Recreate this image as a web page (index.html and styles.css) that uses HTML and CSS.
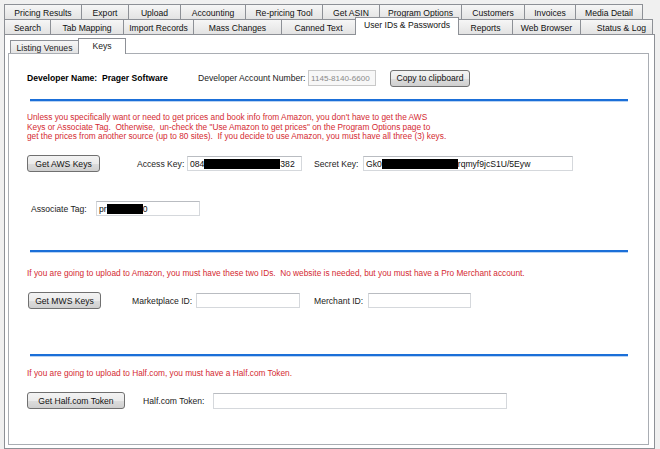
FILE: index.html
```html
<!DOCTYPE html>
<html>
<head>
<meta charset="utf-8">
<link rel="stylesheet" href="styles.css">
</head>
<body>
<div class="win">
  <div class="tabrow r1">
    <div class="tab t-pricing">Pricing Results</div>
    <div class="tab t-export">Export</div>
    <div class="tab t-upload">Upload</div>
    <div class="tab t-accounting">Accounting</div>
    <div class="tab t-repricing">Re-pricing Tool</div>
    <div class="tab t-asin">Get ASIN</div>
    <div class="tab t-options">Program Options</div>
    <div class="tab t-customers">Customers</div>
    <div class="tab t-invoices">Invoices</div>
    <div class="tab t-media">Media Detail</div>
  </div>
  <div class="tabrow r2">
    <div class="tab t-search">Search</div>
    <div class="tab t-mapping">Tab Mapping</div>
    <div class="tab t-import">Import Records</div>
    <div class="tab t-mass">Mass Changes</div>
    <div class="tab t-canned">Canned Text</div>
    <div class="tab sel t-userids">User IDs &amp; Passwords</div>
    <div class="tab t-reports">Reports</div>
    <div class="tab t-web">Web Browser</div>
    <div class="tab t-status">Status &amp; Log</div>
  </div>
  <div class="panel">
    <div class="subtabs">
      <div class="stab t-listing">Listing Venues</div>
      <div class="stab sel t-keys">Keys</div>
    </div>
    <div class="inner">
      <div class="row devrow">
        <div class="devname">Developer Name:&nbsp; Prager Software</div>
        <div class="lbl l-devacct">Developer Account Number:</div>
        <div class="field f-devacct disabled">1145-8140-6600</div>
        <div class="btn b-copy">Copy to clipboard</div>
      </div>
      <div class="rule r-1"></div>
      <p class="note n-aws">Unless you specifically want or need to get prices and book info from Amazon, you don't have to get the AWS<br>Keys or Associate Tag.&nbsp; Otherwise,&nbsp; un-check the "Use Amazon to get prices" on the Program Options page to<br>get the prices from another source (up to 80 sites).&nbsp; If you decide to use Amazon, you must have all three (3) keys.</p>
      <div class="row awsrow">
        <div class="btn b-aws">Get AWS Keys</div>
        <div class="lbl l-access">Access Key:</div>
        <div class="field f-access">084<span class="redact rd-access"></span>382</div>
        <div class="lbl l-secret">Secret Key:</div>
        <div class="field f-secret">Gk0<span class="redact rd-secret"></span>rqmyf9jcS1U/5Eyw</div>
      </div>
      <div class="row assocrow">
        <div class="lbl l-assoc">Associate Tag:</div>
        <div class="field f-assoc">pr<span class="redact rd-assoc"></span>0</div>
      </div>
      <div class="rule r-2"></div>
      <p class="note n-mws">If you are going to upload to Amazon, you must have these two IDs.&nbsp; No website is needed, but you must have a Pro Merchant account.</p>
      <div class="row mwsrow">
        <div class="btn b-mws">Get MWS Keys</div>
        <div class="lbl l-market">Marketplace ID:</div>
        <div class="field f-market"></div>
        <div class="lbl l-merchant">Merchant ID:</div>
        <div class="field f-merchant"></div>
      </div>
      <div class="rule r-3"></div>
      <p class="note n-half">If you are going to upload to Half.com, you must have a Half.com Token.</p>
      <div class="row halfrow">
        <div class="btn b-half">Get Half.com Token</div>
        <div class="lbl l-half">Half.com Token:</div>
        <div class="field f-half"></div>
      </div>
    </div>
  </div>
</div>
</body>
</html>
```
FILE: styles.css
```css
* { box-sizing: border-box; }
html, body { margin: 0; padding: 0; }
body {
  width: 660px;
  height: 449px;
  overflow: hidden;
  background: #f0f0f0;
  font-family: "Liberation Sans", Arial, sans-serif;
  font-size: 8.6px;
  color: #1a1a1a;
}
.win { padding: 4px 6px 0 4px; }

/* top tab rows */
.tabrow { display: flex; align-items: flex-end; height: 15px; }
.tab {
  height: 15px;
  margin-right: -1px;
  border: 1px solid #8d9096;
  border-bottom: 0;
  background: linear-gradient(#f6f6f6, #e3e3e3);
  display: flex;
  align-items: center;
  justify-content: center;
  padding-top: 1px;
  white-space: nowrap;
  color: #111;
}
.tab.sel {
  height: 18px;
  margin-bottom: -1px;
  background: #fff;
  z-index: 2;
  align-items: flex-start;
  padding-top: 2px;
}
.t-pricing { width: 78px; }
.t-export { width: 48px; }
.t-upload { width: 53px; }
.t-accounting { width: 66px; }
.t-repricing { width: 78px; }
.t-asin { width: 58px; }
.t-options { width: 83px; }
.t-customers { width: 64px; }
.t-invoices { width: 52px; }
.t-media { width: 68px; }
.t-search { width: 47px; }
.t-mapping { width: 74px; }
.t-import { width: 71px; }
.t-mass { width: 89px; }
.t-canned { width: 75px; }
.t-userids { width: 104px; }
.t-reports { width: 55px; }
.t-web { width: 69px; }
.t-status { width: 73px; justify-content: flex-end; padding-right: 6px; }

/* main panel */
.panel {
  width: 651px;
  height: 415px;
  border: 1px solid #8d9096;
  background: #fff;
  padding: 3px 0 0 3px;
}
.subtabs { display: flex; align-items: flex-end; height: 15px; padding-left: 2px; }
.stab {
  height: 13px;
  margin-right: -1px;
  border: 1px solid #8d9096;
  border-bottom: 0;
  background: linear-gradient(#f6f6f6, #e3e3e3);
  display: flex;
  align-items: center;
  justify-content: center;
  padding-top: 1px;
  white-space: nowrap;
}
.stab.sel {
  height: 16px;
  margin-bottom: -1px;
  background: #fff;
  z-index: 2;
  align-items: flex-start;
  padding-top: 2px;
}
.t-listing { width: 69px; }
.t-keys { width: 48px; }

.inner {
  width: 641px;
  height: 392px;
  border: 1px solid #a9adb3;
  padding-left: 18px;
}

.row { display: flex; align-items: center; }
.lbl { white-space: nowrap; color: #222; }
.field {
  height: 15px;
  border: 1px solid #d5d8dc;
  border-top-color: #b9bcc1;
  background: #fff;
  padding-left: 2px;
  display: flex;
  align-items: center;
  white-space: nowrap;
  color: #111;
}
.field.disabled { color: #8a8a8a; background: #f7f7f7; border-color: #c8c8c8; }
.redact { display: inline-block; height: 10px; background: #000; }
.btn {
  height: 17px;
  border: 1px solid #707070;
  border-radius: 3px;
  background: linear-gradient(#f3f3f3 0%, #ebebeb 50%, #dddddd 51%, #cfcfcf 100%);
  display: flex;
  align-items: center;
  justify-content: center;
  white-space: nowrap;
  color: #111;
}

.devrow { margin-top: 16px; height: 16px; }
.devname { width: 171px; font-weight: bold; color: #000; }
.l-devacct { width: 110px; }
.f-devacct { width: 68px; height: 16px; font-size: 8.1px; padding-left: 2px; }
.b-copy { width: 80px; margin-left: 14px; }

.rule { width: 598px; margin-left: 3px; background: #1b6fd8; border-bottom: 1px solid #b9d3f3; height: 3px; }
.r-1 { margin-top: 13px; }
.r-2 { margin-top: 34px; }
.r-3 { margin-top: 45px; }

.note { margin: 0; color: #d42a32; font-size: 8.3px; line-height: 9.5px; white-space: nowrap; }
.n-aws { margin-top: 11px; }
.n-mws { margin-top: 15.5px; }
.n-half { margin-top: 11.5px; }

.awsrow { margin-top: 13.5px; height: 17px; }
.b-aws { width: 73px; }
.l-access { margin-left: 37px; width: 50px; }
.f-access { width: 115px; }
.l-secret { margin-left: 12px; width: 49px; }
.f-secret { width: 210px; }
.rd-access { width: 76px; }
.rd-secret { width: 76px; }
.rd-assoc { width: 36px; }

.assocrow { margin-top: 29px; height: 15px; }
.l-assoc { margin-left: 4px; width: 65px; }
.f-assoc { width: 104px; }

.mwsrow { margin-top: 14px; height: 17px; }
.b-mws { width: 73px; margin-left: 1px; }
.l-market { margin-left: 31px; width: 64px; }
.f-market { width: 104px; }
.l-merchant { margin-left: 14px; width: 54px; }
.f-merchant { width: 103px; }

.halfrow { margin-top: 14px; height: 17px; }
.b-half { width: 98px; }
.l-half { margin-left: 18px; width: 70px; }
.f-half { width: 294px; height: 16px; }
```
